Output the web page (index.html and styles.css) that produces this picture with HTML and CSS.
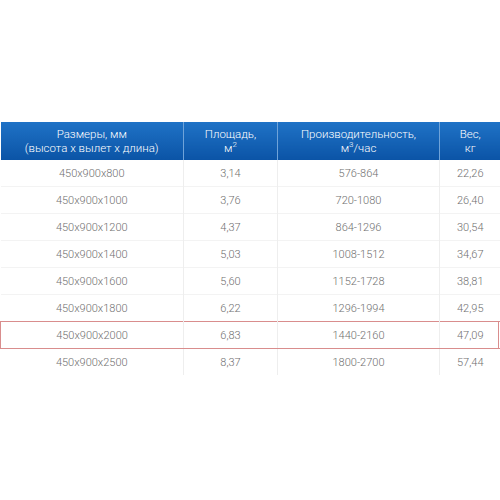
FILE: index.html
```html
<!DOCTYPE html>
<html>
<head>
<meta charset="utf-8">
<link rel="stylesheet" href="styles.css">
</head>
<body>
<div class="page">
<table class="spec">
<colgroup><col class="c1"><col class="c2"><col class="c3"><col class="c4"></colgroup>
<thead>
<tr><th>Размеры, мм<br>(высота х вылет х длина)</th><th>Площадь,<br>м<sup>2</sup></th><th>Производительность,<br>м<sup>3</sup>/час</th><th>Вес,<br>кг</th></tr>
</thead>
<tbody>
<tr><td>450x900x800</td><td>3,14</td><td>576-864</td><td>22,26</td></tr>
<tr><td>450x900x1000</td><td>3,76</td><td>720-1080</td><td>26,40</td></tr>
<tr><td>450x900x1200</td><td>4,37</td><td>864-1296</td><td>30,54</td></tr>
<tr><td>450x900x1400</td><td>5,03</td><td>1008-1512</td><td>34,67</td></tr>
<tr><td>450x900x1600</td><td>5,60</td><td>1152-1728</td><td>38,81</td></tr>
<tr><td>450x900x1800</td><td>6,22</td><td>1296-1994</td><td>42,95</td></tr>
<tr class="hl"><td>450x900x2000</td><td>6,83</td><td>1440-2160</td><td>47,09</td></tr>
<tr><td>450x900x2500</td><td>8,37</td><td>1800-2700</td><td>57,44</td></tr>
</tbody>
</table>
</div>
</body>
</html>
```
FILE: styles.css
```css
html, body { margin: 0; padding: 0; background: #fff; }
.page { padding-top: 122px; width: 500px; }
.spec {
  width: 500px;
  border-collapse: collapse;
  table-layout: fixed;
  font-family: Roboto, "Liberation Sans", sans-serif;
  font-weight: 300;
}
.c1 { width: 183px; }
.c2 { width: 94px; }
.c3 { width: 162px; }
.c4 { width: 61px; }
.spec th {
  height: 38px;
  padding: 0;
  background: linear-gradient(#1f72c6, #0b54a6);
  color: #fff;
  font-size: 11.5px;
  font-weight: 300;
  line-height: 14px;
  border-left: 1px solid #6fa3d9;
  vertical-align: middle;
}
.spec th:first-child { border-left: none; }
.spec sup { font-size: 8px; line-height: 0; vertical-align: 5px; }
.spec td {
  height: 26px;
  padding: 0;
  text-align: center;
  font-size: 11px;
  color: #707070;
  border-left: 1px solid #eeeeee;
  border-top: 1px solid #f3f3f3;
}
.spec td:first-child { border-left: none; }
.spec tbody tr:first-child td { border-top: none; }
.spec tr.hl td {
  border-top: 1px solid #d98d8d;
  border-bottom: 1px solid #d98d8d;
}
.spec tr.hl td:first-child { border-left: 1px solid #d98d8d; }
.spec tr.hl td:last-child { box-shadow: inset -3px 0 0 -1px #fff, inset -3px 0 0 0 #d98d8d; }
```
